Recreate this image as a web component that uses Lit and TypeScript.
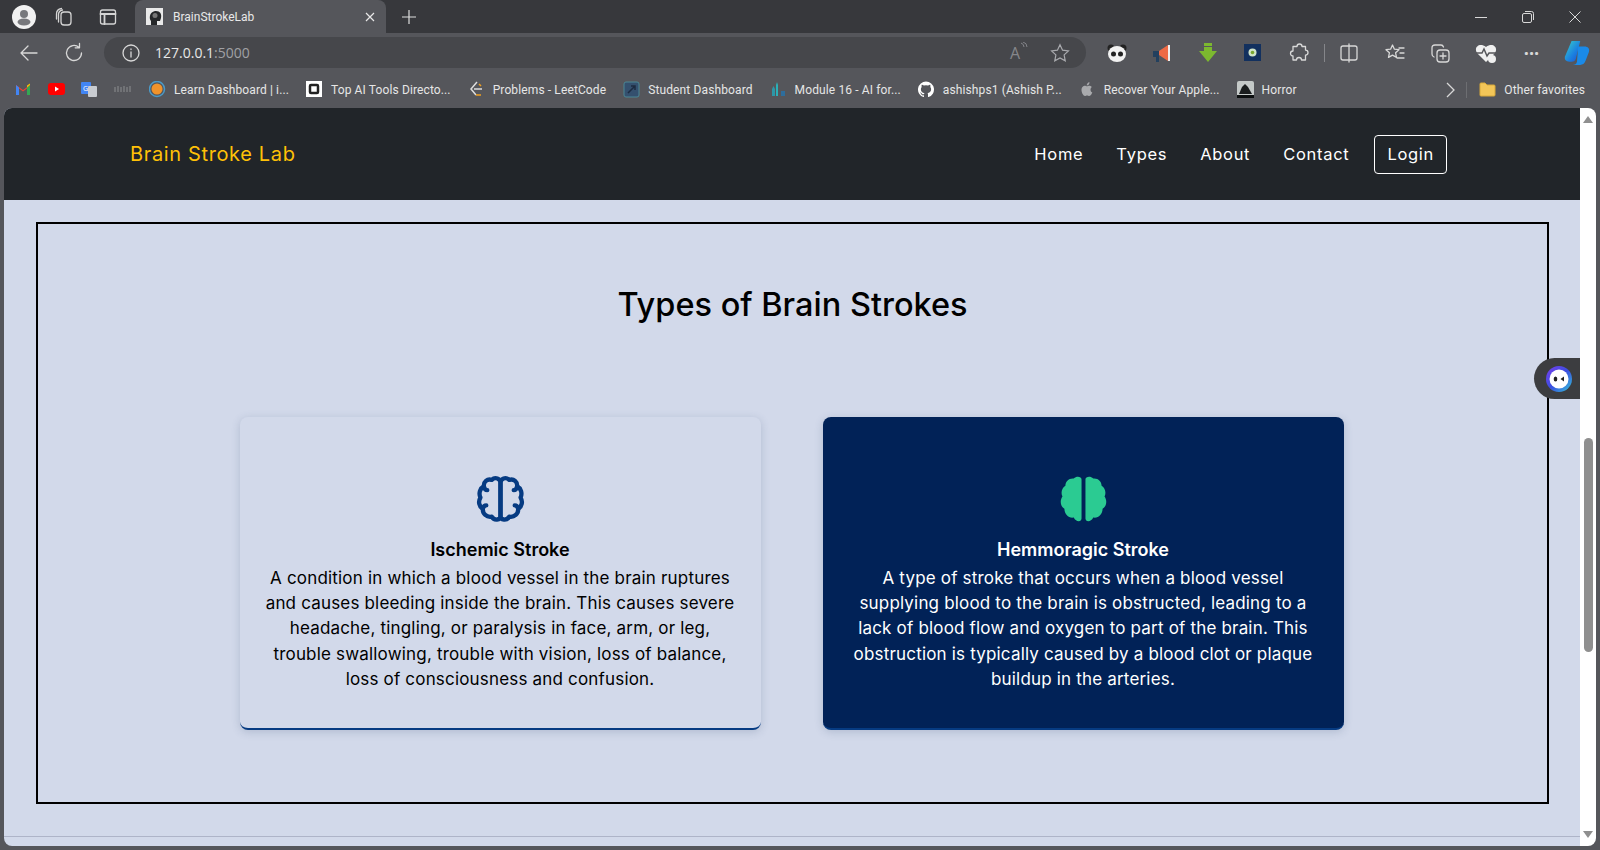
import { LitElement, css, html, svg } from "lit";
import { customElement } from "lit/decorators.js";

// brain halves share one outline, mirrored around x=24
const halfOutline =
  "M24 7 C24 2.5 29.5 0.5 33 4 C37.5 2.5 41.5 6 41 10.5 C45 12.5 46.5 18 44.5 22 C47 26 46 31 42 33.5 C42.5 38.5 38 42.5 33 41.5 C30.5 46 24 45 24 41 Z";
const halfNicks = "M41 10.5 C40.5 13 39 14.5 37.5 14.5 M42 33.5 C41.5 31 40 30 38.5 30";
const halfFill =
  "M26 3.5 C26 0.5 31 -0.5 34 2.5 C39 2 42.5 5.5 42.5 10 C46 12 47.5 17 45.5 21 C48.5 25.5 47.5 31 43.5 33.5 C43.5 39 39 43.5 34 42.5 C31.5 47.5 26 47 26 43.5 Z";

const bookmarks = [
  { name: "Learn Dashboard | i...", icon: "learn" },
  { name: "Top AI Tools Directo...", icon: "topai" },
  { name: "Problems - LeetCode", icon: "leet" },
  { name: "Student Dashboard", icon: "student" },
  { name: "Module 16 - AI for...", icon: "module" },
  { name: "ashishps1 (Ashish P...", icon: "github" },
  { name: "Recover Your Apple...", icon: "apple" },
  { name: "Horror", icon: "horror" },
];

const favicons: Record<string, unknown> = {
  gmail: svg`<path d="M1 14V4l7 5 7-5v10h-3V7.5L8 10.5 4 7.5V14z" fill="#ea4335"/><path d="M1 14V4l3 2.5V14z" fill="#4285f4"/><path d="M15 14V4l-3 2.5V14z" fill="#34a853"/><path d="M12 6.5 15 4V2.5L12 4.5z" fill="#fbbc04"/>`,
  youtube: svg`<rect x="0" y="2" width="17" height="12" rx="3" fill="#f00"/><path d="M7 5.5 11 8l-4 2.5z" fill="#fff"/>`,
  translate: svg`<rect x="0" y="1" width="10" height="12" rx="1" fill="#4285f4"/><rect x="7" y="5" width="9" height="11" rx="1" fill="#c9ccd1"/><text x="2" y="9.5" font-size="7" fill="#fff" font-family="Open Sans">G</text>`,
  dots: svg`<path d="M1 11V6M4 11V5M7 11V6M10 11V5M13 11V6M16 11V5" stroke="#8d8e91" stroke-width="1" fill="none"/>`,
  learn: svg`<circle cx="8" cy="8" r="7.5" fill="none" stroke="#4b9ac7" stroke-width="1.5"/><circle cx="8" cy="8" r="5.5" fill="#f0932b"/>`,
  topai: svg`<rect width="16" height="16" fill="#fff"/><rect x="4" y="4" width="8" height="8" rx="1" fill="none" stroke="#222" stroke-width="2.5"/>`,
  leet: svg`<path d="M9 1 3 8l5 6" fill="none" stroke="#ddd" stroke-width="1.5"/><path d="M6 8h8" stroke="#ddd" stroke-width="1.5"/><path d="M8 14h5M11 3l2 2" stroke="#f0a020" stroke-width="1.5"/>`,
  student: svg`<rect x="1" y="1" width="15" height="15" rx="2" fill="#34506e" stroke="#4a8796"/><path d="M5 12 12 5M8 5h4v4" stroke="#1d2b40" stroke-width="1.5" fill="none"/>`,
  module: svg`<path d="M2 15V8l1.5-3L5 8v7z" fill="#2d97a8"/><path d="M6 15V4l1-3 1 3v11z" fill="#2ab0b8"/><rect x="11" y="10" width="4" height="5" fill="#2e6d9c"/>`,
  github: svg`<path d="M8 .5a8 8 0 0 0-2.5 15.6c.4.1.5-.2.5-.4v-1.4c-2.2.5-2.7-1-2.7-1-.4-.9-.9-1.2-.9-1.2-.7-.5.1-.5.1-.5.8.1 1.2.8 1.2.8.7 1.2 1.9.9 2.3.7.1-.5.3-.9.5-1.1-1.8-.2-3.6-.9-3.6-4 0-.9.3-1.6.8-2.1-.1-.2-.4-1 .1-2.1 0 0 .7-.2 2.2.8a7.6 7.6 0 0 1 4 0c1.5-1 2.2-.8 2.2-.8.4 1.1.2 1.9.1 2.1.5.6.8 1.3.8 2.1 0 3.1-1.9 3.8-3.6 4 .3.2.5.7.5 1.5v2.2c0 .2.1.5.5.4A8 8 0 0 0 8 .5z" fill="#fff"/>`,
  apple: svg`<path d="M11.5 8.5c0-1.7 1.4-2.5 1.4-2.5-.8-1.1-2-1.3-2.4-1.3-1-.1-2 .6-2.5.6s-1.3-.6-2.2-.6C4.7 4.7 2.5 5.8 2.5 9c0 2.8 2 6 3.4 6 .8 0 1.2-.6 2.2-.6s1.3.6 2.2.6c1.5 0 2.8-2.8 3-3.5-1.2-.5-1.8-1.5-1.8-3zM9.8 3.5c.5-.6.8-1.4.7-2.2-.7 0-1.6.5-2.1 1.1-.4.5-.8 1.3-.7 2.1.8 0 1.6-.4 2.1-1z" fill="#a9aaad"/>`,
  horror: svg`<rect width="17" height="17" rx="2" fill="#c4c9c8"/><path d="M2 13 5 6l3-3 3 3 4 7z" fill="#1a1d1e"/><rect x="0" y="14" width="17" height="3" fill="#0c0f10"/>`,
};

const icon = (name: string) =>
  html`<svg class="fav" viewBox="0 0 17 17">${favicons[name]}</svg>`;

const stroke = (paths: unknown) =>
  html`<svg class="tool" viewBox="0 0 24 24" fill="none" stroke="currentColor" stroke-width="1.3" stroke-linecap="round" stroke-linejoin="round">${paths}</svg>`;

@customElement("brain-icon")
class BrainIcon extends LitElement {
  static properties = { filled: { type: Boolean } };
  filled = false;

  render() {
    if (this.filled) {
      return html`<svg viewBox="0 0 48 48">
        <path d=${halfFill} fill="#2bcb92"></path>
        <path d=${halfFill} fill="#2bcb92" transform="matrix(-1 0 0 1 48 0)"></path>
      </svg>`;
    }
    return html`<svg viewBox="0 0 48 48" fill="none" stroke="#063b82" stroke-width="4.4" stroke-linejoin="round" stroke-linecap="round">
      <path d=${halfOutline}></path>
      <path d=${halfNicks}></path>
      <g transform="matrix(-1 0 0 1 48 0)">
        <path d=${halfOutline}></path>
        <path d=${halfNicks}></path>
      </g>
    </svg>`;
  }

  static styles = css`
    :host {
      display: block;
      width: 47px;
      height: 47px;
    }
    svg {
      display: block;
      width: 47px;
      height: 47px;
      overflow: visible;
    }
  `;
}

@customElement("app-root")
export class AppRoot extends LitElement {
  renderTabStrip() {
    return html`
      <div class="tabstrip">
        <div class="avatar">
          <svg viewBox="0 0 24 24" width="24" height="24">
            <circle cx="12" cy="12" r="12" fill="#f1f1f1"></circle>
            <circle cx="12" cy="9" r="4" fill="#77787c"></circle>
            <ellipse cx="12" cy="17" rx="6.5" ry="3.5" fill="#77787c"></ellipse>
          </svg>
        </div>
        <div class="strip-btn">
          ${stroke(svg`<rect x="9" y="7" width="10" height="13" rx="3"/><path d="M6.5 17V9.5C6.5 7 8 5.5 10.5 5M4.5 14V9C4.5 6 6.5 4 9.5 3.5"/>`)}
        </div>
        <div class="strip-btn">
          ${stroke(svg`<rect x="4.5" y="5" width="15" height="14" rx="2"/><path d="M4.5 9h15M8.5 9v10" stroke-width="1.8"/>`)}
        </div>
        <div class="tab">
          <svg class="fav" viewBox="0 0 17 17">
            <rect width="17" height="17" fill="#e9e9e9"></rect>
            <path d="M5 17v-4C3 11 3 4 9 3c5-.5 7 3 6 7l-1 3h-3v4z" fill="#26282a"></path>
            <circle cx="9" cy="7.5" r="2.5" fill="#777"></circle>
          </svg>
          <span class="tab-title">BrainStrokeLab</span>
          <span class="spacer"></span>
          <svg class="close" viewBox="0 0 12 12" stroke="#e8e8e8" stroke-width="1.2"><path d="M2 2l8 8M10 2l-8 8"></path></svg>
        </div>
        <svg class="plus" viewBox="0 0 16 16" stroke="#dedede" stroke-width="1.2"><path d="M8 1v14M1 8h14"></path></svg>
        <span class="spacer"></span>
        <div class="win">
          <svg viewBox="0 0 12 12" stroke="#d8d8d8" fill="none"><path d="M0 6.5h12"></path></svg>
          <svg viewBox="0 0 12 12" stroke="#d8d8d8" fill="none"><rect x=".5" y="2.5" width="9" height="9" rx="1.5"></rect><path d="M3 .5h6.5a2 2 0 0 1 2 2V9"></path></svg>
          <svg viewBox="0 0 12 12" stroke="#d8d8d8" fill="none"><path d="M.5 .5l11 11M11.5 .5l-11 11"></path></svg>
        </div>
      </div>
    `;
  }

  renderToolbar() {
    return html`
      <div class="toolbar">
        <div class="tool-cell first">
          ${stroke(svg`<path d="M20 12H4M11 5l-7 7 7 7"/>`)}
        </div>
        <div class="tool-cell">
          ${stroke(svg`<path d="M19.5 12a7.5 7.5 0 1 1-2.5-5.6M17.5 2.5v4.3h-4.3"/>`)}
        </div>
        <div class="address">
          ${stroke(svg`<circle cx="12" cy="12" r="8"/><path d="M12 11v5M12 8v.6"/>`)}
          <span class="url">127.0.0.1<span class="port">:5000</span></span>
          <span class="spacer"></span>
          <span class="read">A<svg viewBox="0 0 8 8" fill="none" stroke="#84858a"><path d="M1 1q3 1 3 4M3 0q4 1 4 5"></path></svg></span>
          <svg class="star" viewBox="0 0 24 24" fill="none" stroke="#a9aaae" stroke-width="1.3"><path d="M12 3l2.8 5.9 6.4.8-4.7 4.4 1.2 6.4-5.7-3.1-5.7 3.1 1.2-6.4L2.8 9.7l6.4-.8z"></path></svg>
        </div>
        <div class="extensions">
          <div class="tool-cell">
            <svg class="tool" viewBox="0 0 24 24"><circle cx="6" cy="7" r="3.5" fill="#222"></circle><circle cx="18" cy="7" r="3.5" fill="#222"></circle><ellipse cx="12" cy="13" rx="9" ry="8" fill="#f2f2f2"></ellipse><circle cx="8.5" cy="13" r="2.5" fill="#222"></circle><circle cx="15.5" cy="13" r="2.5" fill="#222"></circle></svg>
          </div>
          <div class="tool-cell">
            <svg class="tool" viewBox="0 0 24 24"><path d="M3 10h6v6H3z" fill="#23405e"></path><path d="M9 10l9-6v16l-9-6z" fill="#ee6a45"></path><rect x="18" y="4" width="2" height="16" fill="#eee"></rect><path d="M6 16h3v5H6z" fill="#23405e"></path></svg>
          </div>
          <div class="tool-cell">
            <svg class="tool" viewBox="0 0 24 24"><path d="M8 2h8v3H8zM8 6h8v4h5l-9 11-9-11h5z" fill="#7cb82f"></path></svg>
          </div>
          <div class="tool-cell">
            <svg class="tool" viewBox="0 0 24 24"><rect x="3" y="3" width="17" height="17" fill="#12305e"></rect><circle cx="11.5" cy="11.5" r="4" fill="#cfe3c8"></circle><circle cx="11.5" cy="11.5" r="1.8" fill="#7aa72e"></circle></svg>
          </div>
          <div class="tool-cell">
            ${stroke(svg`<path d="M10 5.5a2.5 2.5 0 0 1 5 0h3.5v3.6a2.5 2.5 0 0 1 0 5V19H14.5a2.5 2.5 0 0 0-5 0H6v-4a2.5 2.5 0 0 1 0-5V5.5z"/>`)}
          </div>
          <span class="tool-sep"></span>
          <div class="tool-cell">
            ${stroke(svg`<rect x="4" y="5" width="16" height="14" rx="2"/><path d="M12 3v18"/>`)}
          </div>
          <div class="tool-cell">
            ${stroke(svg`<path d="M9.5 4l1.9 4.2 4.6.5-3.4 3.1.9 4.6-4-2.3-4 2.3.9-4.6L3 8.7l4.6-.5zM16 7h5M17 12h4M14 17h7"/>`)}
          </div>
          <div class="tool-cell">
            ${stroke(svg`<rect x="9" y="9" width="12" height="12" rx="3"/><path d="M15 12v6M12 15h6M6 16c-1.5-.5-2-1.5-2-3V7c0-2 1-3 3-3h6c1 0 2 .5 2.5 2"/>`)}
          </div>
          <div class="tool-cell">
            <svg class="tool" viewBox="0 0 24 24"><path d="M12 21 3 12C-.5 7 5 1 12 6c7-5 12.5 1 9 6z" fill="#f0f0f0"></path><path d="M2 12h6l2-4 3 7 2-3h7" fill="none" stroke="#55565a" stroke-width="1.5"></path><circle cx="18" cy="18" r="4" fill="#f0f0f0"></circle></svg>
          </div>
          <div class="tool-cell dots">···</div>
          <div class="tool-cell">
            <svg class="copilot" viewBox="0 0 24 24">
              <defs>
                <linearGradient id="cp" x1="0" y1="0" x2="1" y2="1">
                  <stop offset="0" stop-color="#3ad0c8"></stop>
                  <stop offset="0.6" stop-color="#1a7fe0"></stop>
                  <stop offset="1" stop-color="#2050d0"></stop>
                </linearGradient>
              </defs>
              <path d="M7 1h8l-4 16c-.5 2-2 3-4 3H5C2 20 0 18 1 15z" fill="url(#cp)"></path>
              <path d="M13 6h6c3 0 5 2 4 5l-3 8c-1 3-3 4-5 4H8c2 0 3.5-1 4-3z" fill="#1a8ae8"></path>
            </svg>
          </div>
        </div>
      </div>
    `;
  }

  renderBookmarks() {
    return html`
      <div class="bookmarks">
        <div class="bm-icons">
          ${icon("gmail")}${icon("youtube")}${icon("translate")}${icon("dots")}
        </div>
        ${bookmarks.map(
          (b) => html`<div class="bm">${icon(b.icon)}<span>${b.name}</span></div>`
        )}
        <span class="spacer"></span>
        <svg class="chev" viewBox="0 0 10 16" fill="none" stroke="#d8d8d8" stroke-width="1.3"><path d="M2 1l7 7-7 7"></path></svg>
        <span class="bm-sep"></span>
        <div class="bm other">
          <svg class="fav" viewBox="0 0 17 17"><path d="M1 3a1 1 0 0 1 1-1h4l2 2h7a1 1 0 0 1 1 1v9a1 1 0 0 1-1 1H2a1 1 0 0 1-1-1z" fill="#f3c658" stroke="#d9a93a"></path></svg>
          <span>Other favorites</span>
        </div>
      </div>
    `;
  }

  render() {
    return html`
      ${this.renderTabStrip()} ${this.renderToolbar()} ${this.renderBookmarks()}
      <div class="viewport">
        <div class="page">
          <nav class="navbar">
            <a class="brand">Brain Stroke Lab</a>
            <div class="links">
              <a>Home</a>
              <a>Types</a>
              <a>About</a>
              <a>Contact</a>
              <a class="login">Login</a>
            </div>
          </nav>
          <section class="frame">
            <h1>Types of Brain Strokes</h1>
            <div class="cards">
              <article class="card">
                <brain-icon></brain-icon>
                <h2>Ischemic Stroke</h2>
                <p>
                  A condition in which a blood vessel in the brain ruptures<br />
                  and causes bleeding inside the brain. This causes severe<br />
                  headache, tingling, or paralysis in face, arm, or leg,<br />
                  trouble swallowing, trouble with vision, loss of balance,<br />
                  loss of consciousness and confusion.
                </p>
              </article>
              <article class="card active">
                <brain-icon filled></brain-icon>
                <h2>Hemmoragic Stroke</h2>
                <p>
                  A type of stroke that occurs when a blood vessel<br />
                  supplying blood to the brain is obstructed, leading to a<br />
                  lack of blood flow and oxygen to part of the brain. This<br />
                  obstruction is typically caused by a blood clot or plaque<br />
                  buildup in the arteries.
                </p>
              </article>
            </div>
          </section>
          <hr />
          <div class="float-tab">
            <svg viewBox="0 0 26 26" width="26" height="26">
              <defs>
                <linearGradient id="ring" x1="0" y1="0" x2="1" y2="1">
                  <stop offset="0" stop-color="#7a3df0"></stop>
                  <stop offset="0.5" stop-color="#3a4fe0"></stop>
                  <stop offset="1" stop-color="#35c6d8"></stop>
                </linearGradient>
              </defs>
              <circle cx="13" cy="13" r="13" fill="url(#ring)"></circle>
              <circle cx="13" cy="13" r="9.5" fill="#fff"></circle>
              <ellipse cx="9.5" cy="13" rx="1.8" ry="2.5" fill="#222"></ellipse>
              <path d="M18 10.5 14.5 13l3.5 2.5z" fill="#222"></path>
            </svg>
          </div>
        </div>
        <div class="scrollbar">
          <svg viewBox="0 0 10 7" width="10" height="7"><path d="M5 0l5 7H0z" fill="#8f8f8f"></path></svg>
          <div class="thumb"></div>
          <svg viewBox="0 0 10 7" width="10" height="7"><path d="M5 7 0 0h10z" fill="#8f8f8f"></path></svg>
        </div>
      </div>
    `;
  }

  static styles = css`
    :host {
      display: flex;
      flex-direction: column;
      width: 1600px;
      height: 850px;
      overflow: hidden;
      background: #55565b;
      font-family: "Open Sans", "Liberation Sans", sans-serif;
      color: #e8e8e8;
    }
    .spacer {
      flex: 1;
    }
    .fav {
      width: 17px;
      height: 17px;
      flex: none;
    }
    .tool {
      width: 24px;
      height: 24px;
      display: block;
    }

    /* browser chrome */
    .tabstrip {
      height: 33px;
      display: flex;
      align-items: center;
      background: #37383c;
      flex: none;
    }
    .avatar {
      width: 24px;
      height: 24px;
      margin-left: 12px;
      margin-right: 6px;
    }
    .strip-btn {
      width: 44px;
      display: flex;
      justify-content: center;
      color: #d4d4d4;
    }
    .tab {
      width: 251px;
      height: 33px;
      margin-left: 5px;
      box-sizing: border-box;
      padding: 0 10px 0 11px;
      display: flex;
      align-items: center;
      gap: 10px;
      background: #55565b;
      border-radius: 8px 8px 0 0;
    }
    .tab-title {
      font-family: Roboto, sans-serif;
      font-size: 12px;
    }
    .close {
      width: 12px;
      height: 12px;
    }
    .plus {
      width: 16px;
      height: 16px;
      margin-left: 15px;
    }
    .win {
      display: flex;
      gap: 35px;
      margin-right: 19px;
    }
    .win svg {
      width: 12px;
      height: 12px;
    }
    .toolbar {
      height: 37px;
      box-sizing: border-box;
      padding-top: 2px;
      display: flex;
      align-items: center;
      background: #55565b;
      flex: none;
    }
    .tool-cell {
      width: 45.5px;
      flex: none;
      display: flex;
      justify-content: center;
      color: #d8d8d8;
    }
    .tool-cell.first {
      margin-left: 6px;
    }
    .dots {
      font-size: 18px;
      font-weight: 700;
      line-height: 24px;
      width: 46px;
    }
    .copilot {
      width: 26px;
      height: 26px;
      display: block;
    }
    .address {
      width: 987px;
      height: 31px;
      margin-left: 7px;
      border-radius: 16px;
      background: #46474b;
      display: flex;
      align-items: center;
      box-sizing: border-box;
      padding: 0 13px 0 15px;
      color: #d8d8d8;
    }
    .url {
      font-size: 14px;
      margin-left: 12px;
      color: #e8e8e8;
    }
    .port {
      color: #a0a1a5;
    }
    .read {
      display: flex;
      font-size: 16px;
      color: #85868a;
      margin-right: 21px;
    }
    .read svg {
      width: 8px;
      height: 8px;
    }
    .star {
      width: 22px;
      height: 22px;
      margin-right: 2px;
    }
    .extensions {
      margin-left: 8px;
      display: flex;
      align-items: center;
    }
    .tool-sep {
      width: 1px;
      height: 18px;
      background: #85868a;
      margin: 0 2px;
      flex: none;
    }
    .bookmarks {
      height: 38px;
      box-sizing: border-box;
      padding-top: 1px;
      display: flex;
      align-items: center;
      background: #55565b;
      font-family: Roboto, sans-serif;
      font-size: 12px;
      letter-spacing: 0.12px;
      color: #e6e6e6;
      flex: none;
    }
    .bm-icons {
      display: flex;
      gap: 16px;
      margin-left: 15px;
      margin-right: 18px;
    }
    .bm {
      display: flex;
      align-items: center;
      gap: 8px;
      margin-right: 17px;
      white-space: nowrap;
    }
    .chev {
      width: 10px;
      height: 16px;
    }
    .bm-sep {
      width: 1px;
      height: 16px;
      background: #6d6e72;
      margin: 0 12px 0 11px;
    }
    .bm.other {
      margin-right: 15px;
    }

    /* page */
    .viewport {
      flex: 1;
      min-height: 0;
      display: flex;
      margin: 0 4px 4px;
      border-radius: 8px;
      overflow: hidden;
    }
    .page {
      position: relative;
      flex: 1;
      min-width: 0;
      display: flex;
      flex-direction: column;
      background: #d2d9ea;
      font-family: Inter, "Open Sans", sans-serif;
      color: #000;
    }
    .scrollbar {
      width: 16px;
      background: #fff;
      display: flex;
      flex-direction: column;
      align-items: center;
      padding: 8px 0;
      box-sizing: border-box;
    }
    .thumb {
      width: 9px;
      height: 214px;
      margin-top: 315px;
      margin-bottom: auto;
      border-radius: 5px;
      background: #8f8f8f;
    }
    .navbar {
      height: 92px;
      flex: none;
      background: #212529;
      display: flex;
      align-items: center;
      justify-content: space-between;
      padding: 0 133px 0 126px;
    }
    .brand {
      font-size: 20px;
      letter-spacing: 0.64px;
      color: #ffc107;
    }
    .links {
      display: flex;
      align-items: center;
      gap: 33px;
      font-size: 16.5px;
      letter-spacing: 0.7px;
      color: #fff;
    }
    .login {
      border: 1px solid #fff;
      border-radius: 4px;
      padding: 8.5px 12px;
      margin-left: -8px;
    }
    .frame {
      margin: 22px 31px 0 32px;
      height: 582px;
      box-sizing: border-box;
      border: 2px solid #000;
      display: flex;
      flex-direction: column;
      align-items: center;
    }
    h1 {
      margin: 59px 0 0;
      font-size: 32.5px;
      font-weight: 500;
      line-height: 44px;
    }
    .cards {
      display: flex;
      gap: 62px;
      margin: 90px 2px 0 0;
    }
    .card {
      width: 521px;
      height: 313px;
      box-sizing: border-box;
      padding-top: 59px;
      display: flex;
      flex-direction: column;
      align-items: center;
      text-align: center;
      border-radius: 8px;
      border-bottom: 2px solid #063b82;
      background: #d2d9ea;
      box-shadow: 0 2px 8px rgba(60, 80, 120, 0.22);
    }
    .card.active {
      background: #012257;
      color: #fff;
    }
    h2 {
      margin: 14px 0 0;
      font-size: 18px;
      font-weight: 600;
      line-height: 25px;
    }
    p {
      margin: 4px 0 0;
      font-size: 17px;
      letter-spacing: 0.18px;
      line-height: 25.2px;
      white-space: nowrap;
    }
    hr {
      margin: 32px 0 0;
      border: none;
      border-top: 1px solid #aeb4c8;
    }
    .float-tab {
      position: absolute;
      right: 0;
      top: 250px;
      width: 46px;
      height: 41px;
      background: #3c3d40;
      border-radius: 21px 0 0 21px;
      display: flex;
      align-items: center;
      padding-left: 12px;
      box-sizing: border-box;
    }
  `;
}
